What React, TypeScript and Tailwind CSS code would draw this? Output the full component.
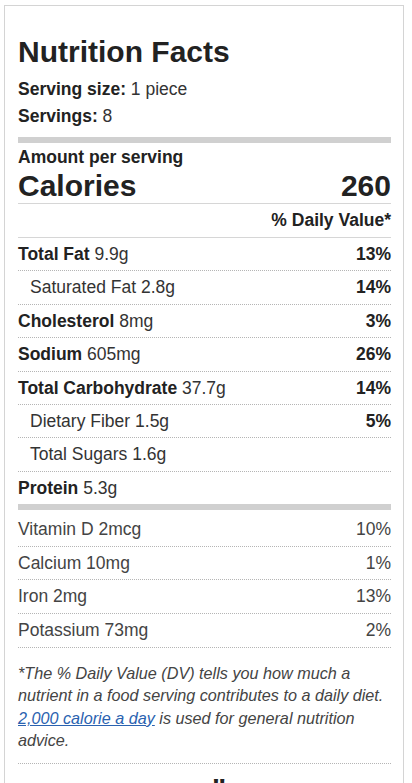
const nutrients = [
  { label: 'Total Fat', amount: '9.9g', dv: '13%', bold: true },
  { label: 'Saturated Fat', amount: '2.8g', dv: '14%', sub: true },
  { label: 'Cholesterol', amount: '8mg', dv: '3%', bold: true },
  { label: 'Sodium', amount: '605mg', dv: '26%', bold: true },
  { label: 'Total Carbohydrate', amount: '37.7g', dv: '14%', bold: true },
  { label: 'Dietary Fiber', amount: '1.5g', dv: '5%', sub: true },
  { label: 'Total Sugars', amount: '1.6g', dv: '', sub: true },
];

const vitamins = [
  { label: 'Vitamin D', amount: '2mcg', dv: '10%' },
  { label: 'Calcium', amount: '10mg', dv: '1%' },
  { label: 'Iron', amount: '2mg', dv: '13%' },
  { label: 'Potassium', amount: '73mg', dv: '2%' },
];

export default function App() {
  return (
    <div className="min-h-screen bg-white px-1 pt-[5px] font-['Liberation_Sans',Arial,sans-serif] text-[#333]">
      <div className="w-[400px] border border-[#d4d4d4] pl-[13px] pr-[12px] pt-[28px] pb-10">
        <h1 className="text-[30px] font-bold leading-[36px] text-[#222]">Nutrition Facts</h1>

        <div className="mt-[6px] text-[17.5px] leading-[27px]">
          <p>
            <span className="font-bold text-[#222]">Serving size:</span> 1 piece
          </p>
          <p>
            <span className="font-bold text-[#222]">Servings:</span> 8
          </p>
        </div>

        <div className="mt-[7px] h-[6px] bg-[#d0d0d0]" />

        <p className="mt-[4px] text-[17.5px] font-bold leading-[20px] text-[#222]">Amount per serving</p>
        <div className="mt-[4px] flex items-end justify-between border-b border-[#d6d6d6] pb-[2px] text-[30px] font-bold leading-[30px] text-[#222]">
          <span>Calories</span>
          <span>260</span>
        </div>

        <div className="border-b border-[#d6d6d6] py-1 text-right text-[17.5px] font-bold leading-[25px] text-[#222]">
          % Daily Value*
        </div>

        {nutrients.map((n) => (
          <div
            key={n.label}
            className="flex justify-between border-b border-dotted border-[#b5b5b5] py-1 text-[17.5px] leading-[24.4px]"
          >
            <span className={n.sub ? 'pl-3' : ''}>
              {n.bold ? <span className="font-bold text-[#222]">{n.label}</span> : n.label} {n.amount}
            </span>
            <span className="font-bold text-[#222]">{n.dv}</span>
          </div>
        ))}

        <div className="py-1 text-[17.5px] leading-[24.4px]">
          <span className="font-bold text-[#222]">Protein</span> 5.3g
        </div>

        <div className="mb-[3px] h-[6px] bg-[#d0d0d0]" />

        {vitamins.map((v) => (
          <div
            key={v.label}
            className="flex justify-between border-b border-dotted border-[#b5b5b5] py-1 text-[17.5px] leading-[24.6px] text-[#444]"
          >
            <span>
              {v.label} {v.amount}
            </span>
            <span>{v.dv}</span>
          </div>
        ))}

        <p className="border-b border-dotted border-[#b5b5b5] pt-[14px] pb-[11px] text-[16.2px] italic leading-[22.5px] text-[#444]">
          *The % Daily Value (DV) tells you how much a nutrient in a food serving contributes to a daily diet.{' '}
          <a href="#" className="text-[#2a62b0] underline">
            2,000 calorie a day
          </a>{' '}
          is used for general nutrition advice.
        </p>

        <p className="mt-[7px] pl-[194px] text-[30px] font-bold leading-[36px] text-[#222]">"</p>
      </div>
    </div>
  );
}
